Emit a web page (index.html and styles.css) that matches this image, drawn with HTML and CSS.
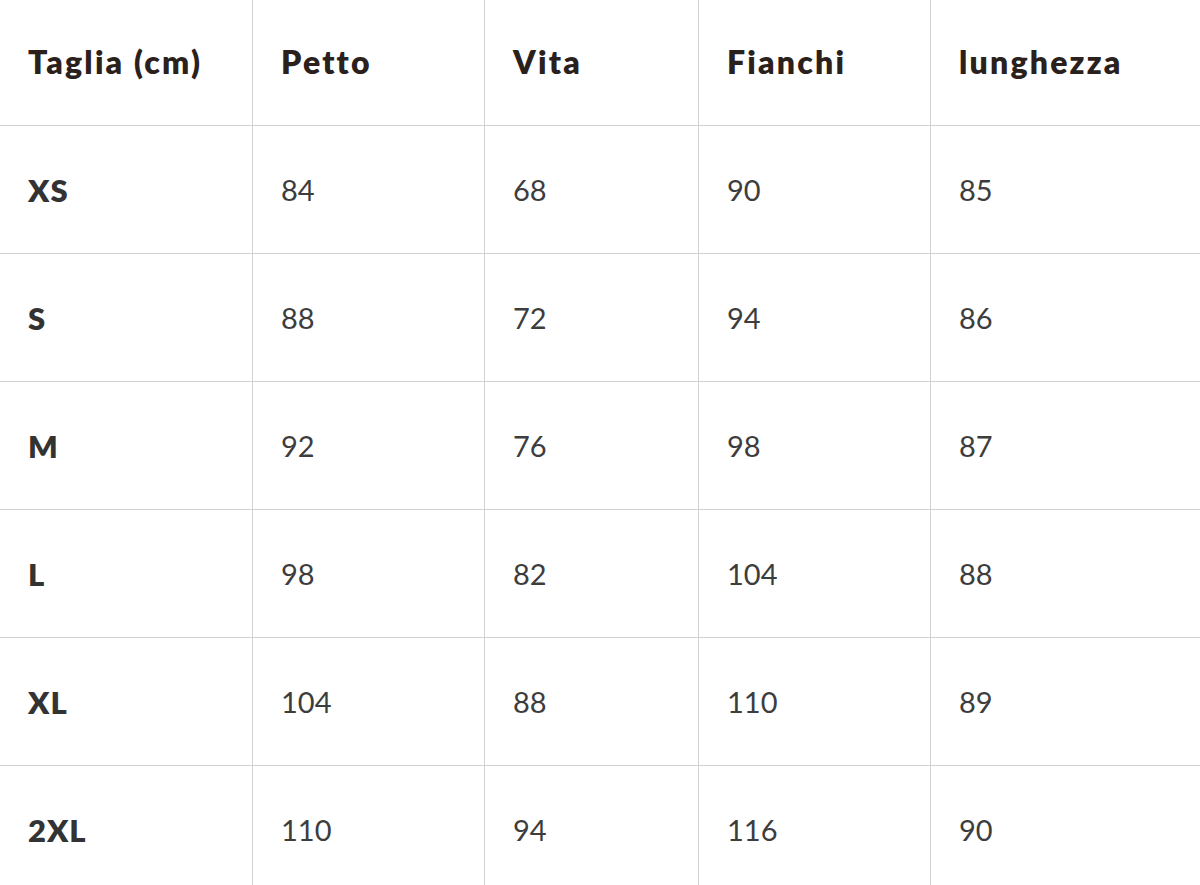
FILE: index.html
```html
<!DOCTYPE html>
<html lang="it">
<head>
<meta charset="utf-8">
<title>Tabella taglie</title>
<link rel="stylesheet" href="styles.css">
</head>
<body>
<table class="size-table">
  <colgroup>
    <col class="c1"><col class="c2"><col class="c3"><col class="c4"><col class="c5">
  </colgroup>
  <thead>
    <tr class="head-row">
      <th>Taglia (cm)</th><th>Petto</th><th>Vita</th><th>Fianchi</th><th>lunghezza</th>
    </tr>
  </thead>
  <tbody>
    <tr><th>XS</th><td>84</td><td>68</td><td>90</td><td>85</td></tr>
    <tr><th>S</th><td>88</td><td>72</td><td>94</td><td>86</td></tr>
    <tr><th>M</th><td>92</td><td>76</td><td>98</td><td>87</td></tr>
    <tr><th>L</th><td>98</td><td>82</td><td>104</td><td>88</td></tr>
    <tr><th>XL</th><td>104</td><td>88</td><td>110</td><td>89</td></tr>
    <tr><th>2XL</th><td>110</td><td>94</td><td>116</td><td>90</td></tr>
  </tbody>
</table>
</body>
</html>
```
FILE: styles.css
```css
html, body {
  margin: 0;
  padding: 0;
  background: #ffffff;
}
body {
  font-family: "Lato", "Open Sans", sans-serif;
  overflow: hidden;
}
.size-table {
  border-collapse: separate;
  border-spacing: 0;
  table-layout: fixed;
  width: 1200px;
}
.c1 { width: 253px; }
.c2 { width: 232px; }
.c3 { width: 214px; }
.c4 { width: 232px; }
.c5 { width: 269px; }
.size-table th,
.size-table td {
  box-sizing: border-box;
  height: 128px;
  padding: 0 0 0 28px;
  text-align: left;
  vertical-align: middle;
  border-right: 1px solid #d2d2d2;
  border-bottom: 1px solid #d2d2d2;
  font-size: 29px;
  white-space: nowrap;
}
.size-table th:last-child,
.size-table td:last-child {
  border-right: none;
}
.size-table td {
  font-weight: 400;
  color: #3d3d3d;
}
.size-table td,
.size-table thead th + th { padding-left: 28px; }
.size-table tbody th {
  font-weight: 800;
  font-size: 31px;
  letter-spacing: 1px;
  color: #333333;
}
.head-row th {
  height: 126px;
  font-weight: 800;
  color: #2b211c;
  font-size: 32px;
  letter-spacing: 2.2px;
  padding-bottom: 2px;
}
```
